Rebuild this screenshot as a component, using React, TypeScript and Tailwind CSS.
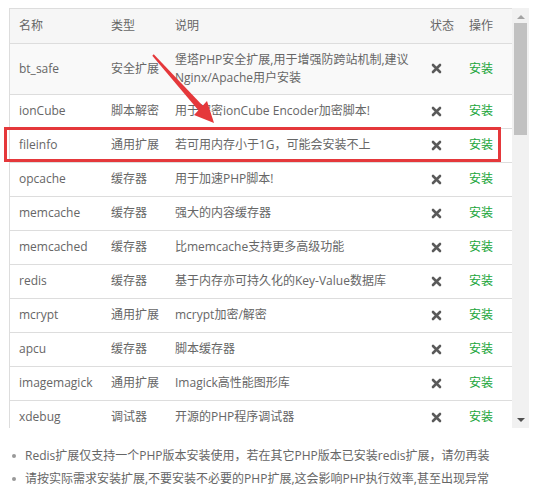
import React from "react";

type Ext = { name: string; type: string; desc: React.ReactNode };

const exts: Ext[] = [
  {
    name: "bt_safe",
    type: "安全扩展",
    desc: (
      <>
        堡塔PHP安全扩展,用于增强防跨站机制,建议
        <br />
        Nginx/Apache用户安装
      </>
    ),
  },
  { name: "ionCube", type: "脚本解密", desc: "用于解密ionCube Encoder加密脚本!" },
  { name: "fileinfo", type: "通用扩展", desc: "若可用内存小于1G，可能会安装不上" },
  { name: "opcache", type: "缓存器", desc: "用于加速PHP脚本!" },
  { name: "memcache", type: "缓存器", desc: "强大的内容缓存器" },
  { name: "memcached", type: "缓存器", desc: "比memcache支持更多高级功能" },
  { name: "redis", type: "缓存器", desc: "基于内存亦可持久化的Key-Value数据库" },
  { name: "mcrypt", type: "通用扩展", desc: "mcrypt加密/解密" },
  { name: "apcu", type: "缓存器", desc: "脚本缓存器" },
  { name: "imagemagick", type: "通用扩展", desc: "Imagick高性能图形库" },
  { name: "xdebug", type: "调试器", desc: "开源的PHP程序调试器" },
];

function CrossIcon() {
  return (
    <svg width="11" height="11" viewBox="0 0 11 11">
      <path d="M2 2 L9 9 M9 2 L2 9" stroke="#5a5a5a" strokeWidth="2.6" strokeLinecap="round" />
    </svg>
  );
}

export default function App() {
  return (
    <div
      className="relative w-[537px] h-[488px] bg-white text-[12px] text-[#666]"
      style={{ fontFamily: '"Open Sans", "Noto Sans CJK SC", sans-serif' }}
    >
      <div className="flex pt-[8px] pl-[9px]">
        <div className="w-[503px] h-[420px] overflow-hidden border-l border-t border-[#ddd]">
          <table className="w-full border-collapse">
            <thead className="bg-[#f6f6f6]">
              <tr>
                <th className="h-[34px] w-[92px] pl-[9px] text-left font-normal">名称</th>
                <th className="w-[64px] pl-[9px] text-left font-normal">类型</th>
                <th className="w-[255px] pl-[9px] text-left font-normal">说明</th>
                <th className="w-[40px] pl-[9px] text-left font-normal">状态</th>
                <th className="pl-[8px] text-left font-normal">操作</th>
              </tr>
            </thead>
            <tbody>
              {exts.map((e, i) => (
                <tr
                  key={e.name}
                  className={`border-t border-[#ddd] ${i === 0 ? "bg-[#f9f9f9]" : ""}`}
                >
                  <td className="h-[34px] pl-[9px] py-[7px] leading-[18px]">{e.name}</td>
                  <td className="pl-[9px] leading-[18px]">{e.type}</td>
                  <td className="pl-[9px] py-[7px] leading-[18px]">{e.desc}</td>
                  <td className="pl-[10px]">
                    <CrossIcon />
                  </td>
                  <td className="pl-[8px] text-[#20a53a]">安装</td>
                </tr>
              ))}
            </tbody>
          </table>
        </div>
        <div className="w-[17px] h-[420px] bg-[#f1f1f1] flex flex-col items-center">
          <div className="h-[15px] flex items-center justify-center pt-[3px]">
            <div className="w-0 h-0 border-x-[4px] border-x-transparent border-b-[4px] border-b-[#a3a3a3]" />
          </div>
          <div className="w-[13px] h-[112px] bg-[#c1c1c1]" />
          <div className="flex-1" />
          <div className="h-[17px] flex items-center justify-center">
            <div className="w-0 h-0 border-x-[4px] border-x-transparent border-t-[4px] border-t-[#505050]" />
          </div>
        </div>
      </div>

      <ul className="pl-[12px] pt-[16px] leading-[23px]">
        <li className="flex items-center gap-[9px]">
          <span className="w-[4px] h-[4px] rounded-full bg-[#999]" />
          Redis扩展仅支持一个PHP版本安装使用，若在其它PHP版本已安装redis扩展，请勿再装
        </li>
        <li className="flex items-center gap-[9px]">
          <span className="w-[4px] h-[4px] rounded-full bg-[#999]" />
          请按实际需求安装扩展,不要安装不必要的PHP扩展,这会影响PHP执行效率,甚至出现异常
        </li>
      </ul>

      {/* annotation: red box + arrow */}
      <div className="absolute left-[4px] top-[127px] w-[497px] h-[35px] border-[3px] border-[#e5383b] pointer-events-none" />
      <svg className="absolute left-0 top-0 pointer-events-none" width="537" height="488">
        <polygon points="152.3,55.7 153.7,54.3 203.5,106.5 199,111" fill="#e5383b" />
        <polygon points="214,123 194,115 207,101" fill="#e5383b" />
      </svg>
    </div>
  );
}
